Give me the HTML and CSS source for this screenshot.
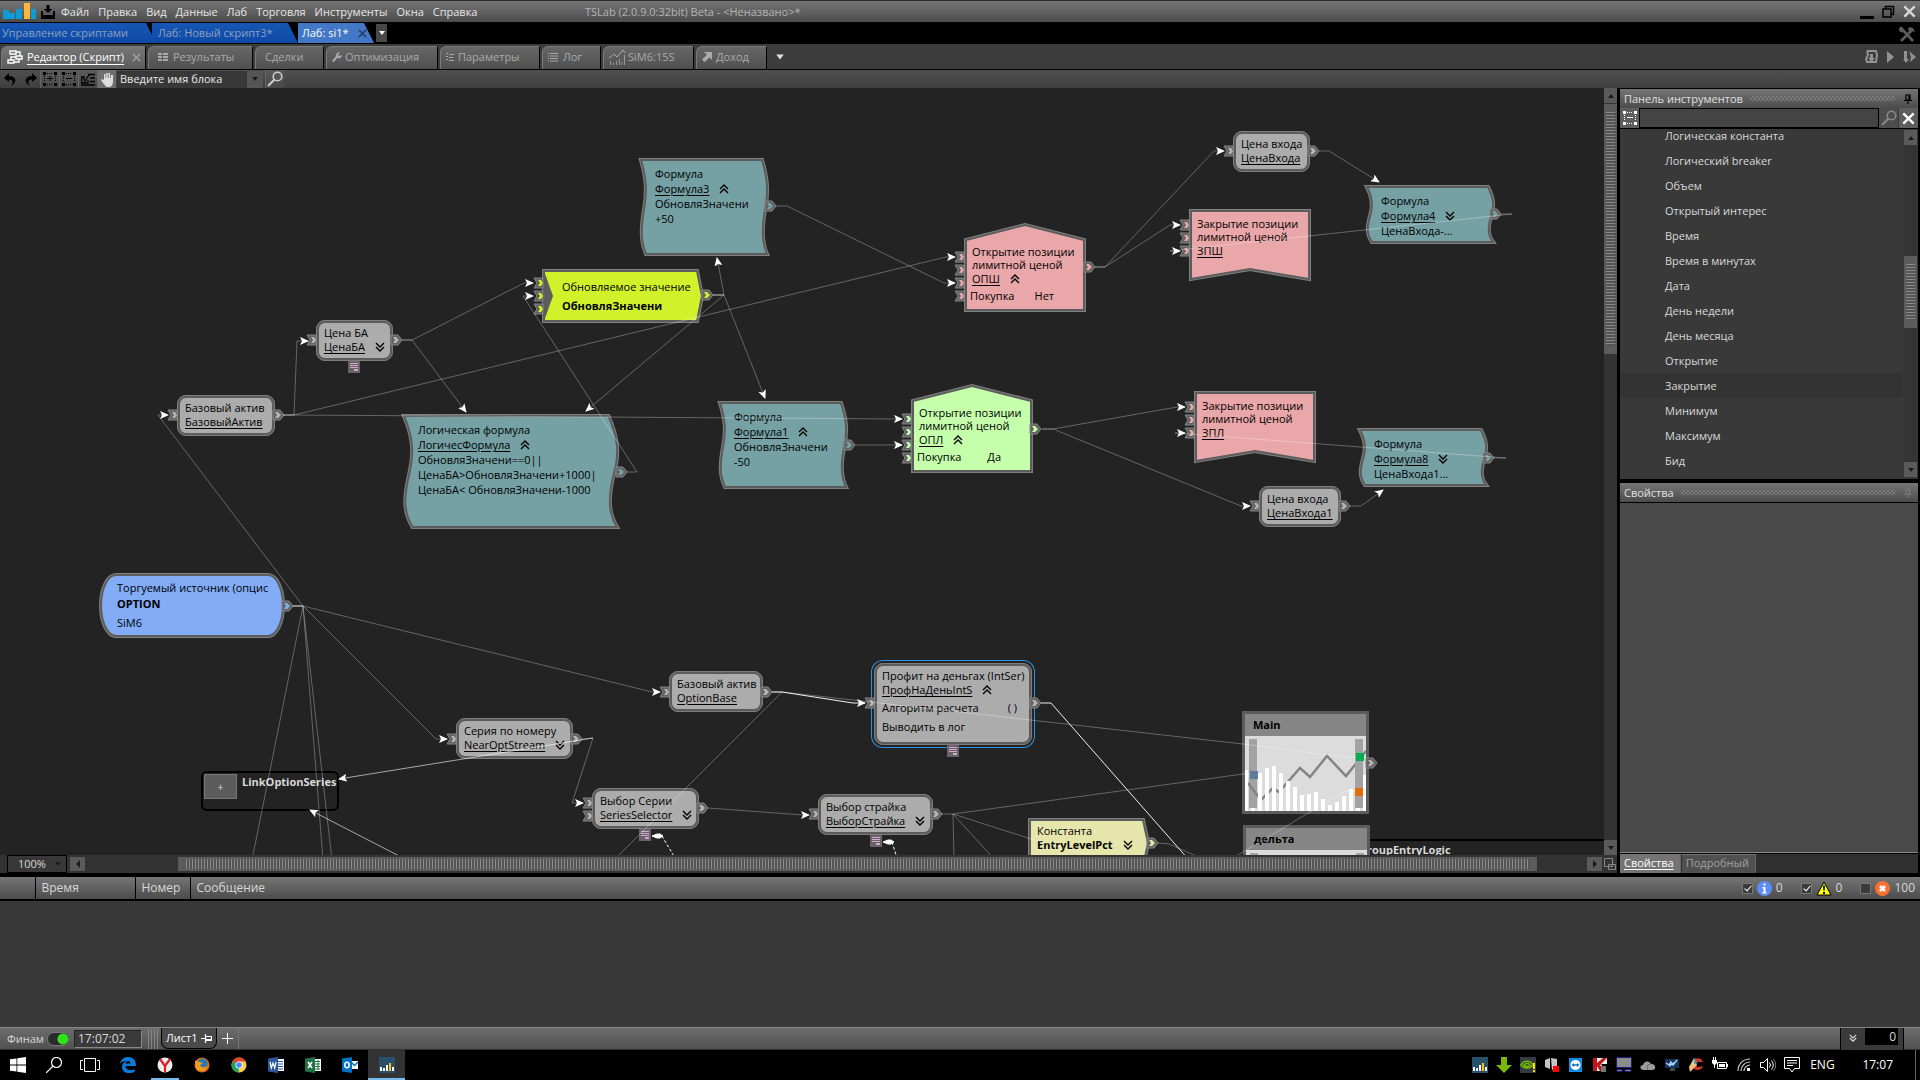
FILE: index.html
```html
<!DOCTYPE html>
<html lang="ru">
<head>
    <meta charset="UTF-8">
    <meta name="viewport" content="width=device-width, initial-scale=1.0">
    <title>TSLab (2.0.9.0:32bit) Beta - &lt;Неназвано&gt;*</title>
    <link rel="stylesheet" href="styles.css">
</head>
<body>
    <!-- shared icons and node parts -->
    <svg class="defs" width="0" height="0" aria-hidden="true">
        <defs>
            <symbol id="chev-down" viewBox="0 0 10 10"><path d="M1 1l4 4 4-4M1 5l4 4 4-4" fill="none" stroke="currentColor" stroke-width="1.4"/></symbol>
            <symbol id="chev-up" viewBox="0 0 10 10"><path d="M1 5l4-4 4 4M1 9l4-4 4 4" fill="none" stroke="currentColor" stroke-width="1.4"/></symbol>
            <symbol id="arrow-down" viewBox="0 0 8 8"><path d="M1 2h6L4 6z" fill="currentColor"/></symbol>
            <symbol id="arrow-up" viewBox="0 0 8 8"><path d="M1 6h6L4 2z" fill="currentColor"/></symbol>
            <symbol id="arrow-left" viewBox="0 0 8 8"><path d="M6 0v8L2 4z" fill="currentColor"/></symbol>
            <symbol id="arrow-right" viewBox="0 0 8 8"><path d="M2 0v8l4-4z" fill="currentColor"/></symbol>
            <symbol id="cross" viewBox="0 0 10 10"><path d="M1 1l8 8M9 1l-8 8" stroke="currentColor" stroke-width="1.8"/></symbol>
            <symbol id="loupe" viewBox="0 0 16 16"><circle cx="10.5" cy="5.5" r="4.3" fill="none" stroke="currentColor" stroke-width="1.6"/><path d="M7.5 8.5L1 15" stroke="currentColor" stroke-width="2.2"/></symbol>
            <symbol id="pin" viewBox="0 0 8 10"><path d="M2 1h4v5H2zM5 1v5M0 6.5h8M4 6v4" fill="none" stroke="currentColor" stroke-width="1.2"/></symbol>
            <symbol id="select-minus" viewBox="0 0 14 14"><path d="M1.5 4v6M12.5 4v6M4 1.5h6M4 12.5h6" fill="none" stroke="currentColor" stroke-dasharray="1 1"/><path d="M0 0h3v3H0zM11 0h3v3h-3zM0 11h3v3H0zM11 11h3v3h-3zM4 6h6v1H4z" fill="currentColor"/></symbol>
            <symbol id="select-plus" viewBox="0 0 14 14"><path d="M1.5 4v6M12.5 4v6M4 1.5h6M4 12.5h6" fill="none" stroke="currentColor" stroke-dasharray="1 1"/><path d="M0 0h3v3H0zM11 0h3v3h-3zM0 11h3v3H0zM11 11h3v3h-3zM4 6h6v1H4zM6.500 4h1v5h-1z" fill="currentColor"/></symbol>
            <symbol id="formula" viewBox="0 0 100 100" preserveAspectRatio="none"><path vector-effect="non-scaling-stroke" d="M0 0H96C100 18 101.500 32 98.500 52C96 72 95.500 86 100 100H4C-.5 86 0 72 2.500 52C5 32 4 18 0 0z"/></symbol>
            <symbol id="note" viewBox="0 0 12 12"><path d="M0 0h12v12H0z" fill="#696369"/><path d="M2 2.500h8M2 4.500h8M2 6.500h8" stroke="#d0a8d0"/><path d="M6 8h4v2H6z" fill="#d0a8d0"/></symbol>
            <symbol id="tslab" viewBox="0 0 16 16"><path d="M0 0h16v16H0z" fill="#27506b"/><path d="M1 10h2v4H1zM4 11h2v3H4zM7 8h2v6H7zM13 10h2v4h-2z" fill="#fff"/><path d="M10 6h2v8h-2z" fill="#ffc20e"/></symbol>
            <g id="in">
                <path d="M-9-5H0V5H-9L-6 0z" fill="#626262" stroke="#858585"/>
                <path d="M-5-3H-2L0 0L-2 3H-5L-3 0z" fill="currentColor"/>
            </g>
            <g id="out">
                <path d="M-2-5H5L9 0L5 5H-2z" fill="#626262" stroke="#858585"/>
                <path d="M0-3H3L6 0L3 3H0L2 0z" fill="currentColor"/>
            </g>
            <marker id="dart" viewBox="0 0 9 8" refX="8" refY="4" markerWidth="9" markerHeight="8" markerUnits="userSpaceOnUse" orient="auto"><path d="M0 0l9 4-9 4 2-4z" fill="#fff"/></marker>
        </defs>
    </svg>

    <div class="app">
        <header class="titlebar">
            <svg class="logo" width="34" height="18" viewBox="0 0 34 18"><path d="M0 7h6v9H0zM6 10h6v6H6zM13 6h6v10h-6zM28 6h5v10h-5z" fill="#0c9dd6"/><path d="M21 0h6v16h-6z" fill="#fdb53a"/></svg>
            <svg width="14" height="14" viewBox="0 0 14 14"><path d="M5.500 0h3v4h3L7 8 2.500 4h3zM0 6h2v4h10V6h2v8H0z"/></svg>
            <nav class="menu">
                <button>Файл</button>
                <button>Правка</button>
                <button>Вид</button>
                <button>Данные</button>
                <button>Лаб</button>
                <button>Торговля</button>
                <button>Инструменты</button>
                <button>Окна</button>
                <button>Справка</button>
            </nav>
            <h1>TSLab (2.0.9.0:32bit) Beta - &lt;Неназвано&gt;*</h1>
            <div class="window-buttons">
                <button aria-label="Свернуть"><svg width="14" height="14" viewBox="0 0 14 14"><path d="M0 11h14v3H0z"/></svg></button>
                <button aria-label="Восстановить"><svg width="13" height="14" viewBox="0 0 13 14"><path d="M1 4h8v8H1zM3.500 4V1.500h8v8H9" fill="none" stroke="#000" stroke-width="1.500"/></svg></button>
                <button aria-label="Закрыть"><svg width="13" height="13"><use href="#cross"/></svg></button>
            </div>
        </header>

        <nav class="workspaces">
            <button class="ws-tab ws-first">Управление скриптами</button>
            <button class="ws-tab ws-second">Лаб: Новый скрипт3*</button>
            <button class="ws-tab active">Лаб: si1* <svg width="9" height="9"><use href="#cross"/></svg></button>
            <button class="ws-more" aria-label="Список"><svg width="8" height="8"><use href="#arrow-down"/></svg></button>
            <svg class="tools" width="18" height="17" viewBox="0 0 18 17"><path d="M3 2l12 13M15 3L3 15" stroke="#5c5c5c" stroke-width="2.600"/><path d="M1 4c1 3 4 3 5 1L4 1C2 0 1 2 1 4zM10 2c3-2 6 0 7 4l-3-1-3 2z" fill="#5c5c5c"/></svg>
        </nav>

        <nav class="doc-tabs">
            <button class="doc active"><svg width="16" height="14" viewBox="0 0 16 14"><path d="M3 1h6v3H3zM9 6h6v3H9zM1 10h6v3H1zM9 2h4v4M9 7H4v3M7 12h5V9" fill="none" stroke="#fff" stroke-width="1.400"/></svg><span>Редактор (Скрипт)</span><svg class="doc-close" width="9" height="9"><use href="#cross"/></svg></button>
            <button class="doc d-results"><svg width="10" height="8" viewBox="0 0 10 8"><path d="M0 0h4v2H0zM5 0h5v2H5zM0 3h4v2H0zM5 3h5v2H5zM0 6h4v2H0zM5 6h5v2H5z" fill="#aaa"/></svg>Результаты</button>
            <button class="doc d-deals">Сделки</button>
            <button class="doc d-optim"><svg width="10" height="10" viewBox="0 0 10 10"><path d="M0 9l4-5C4 1 6 0 8 0L6 3l1 1 3-1c0 3-3 4-5 3L2 10z" fill="#aaa"/></svg>Оптимизация</button>
            <button class="doc d-params"><svg width="8" height="8" viewBox="0 0 8 8"><path d="M0 .5h2M3 1.500h5M0 3.500h2M3 4.500h4M0 6.500h2M3 7.500h5" stroke="#aaa"/></svg>Параметры</button>
            <button class="doc d-log"><svg width="10" height="9" viewBox="0 0 10 9"><path d="M0 .5h1M2 .5h8M0 3h1M2 3h8M0 5.500h1M2 5.500h8M0 8h1M2 8h8" stroke="#aaa"/></svg>Лог</button>
            <button class="doc d-chart"><svg width="16" height="15" viewBox="0 0 16 15"><path d="M0 8l5-4 3 3 6-7 2 3" fill="none" stroke="#aaa"/><path d="M1.500 11v4M4.500 13v2M7.500 11v4M10.500 9v6M13 12v3M15.500 5v10" stroke="#8d9e95"/></svg>SiM6:15S</button>
            <button class="doc d-profit"><svg width="10" height="10" viewBox="0 0 10 10"><path d="M2 0h8v8L7.500 5.500 2.500 10 0 7.500l5-4.800z" fill="#aaa"/></svg>Доход</button>
            <button class="doc-more" aria-label="Ещё"><svg width="10" height="10"><use href="#arrow-down"/></svg></button>
            <div class="run-tools">
                <svg width="13" height="13" viewBox="0 0 13 13"><path d="M2 1h9l1 4-1 7H2L1 9M2 1l1 4-2 4" fill="none" stroke="#929292" stroke-width="2"/><path d="M5 4h3v4h2l-3.500 4L3 8h2z" fill="#929292"/></svg>
                <svg width="7" height="12" viewBox="0 0 7 12"><path d="M0 0l7 6-7 6z" fill="#929292"/></svg>
                <svg width="13" height="12" viewBox="0 0 13 12"><path d="M1 0h3v8h2l-3 4-3-4h1zM6 0l7 6-6 5 1-5z" fill="#929292"/></svg>
            </div>
        </nav>

        <div class="toolbar">
            <button class="flat" aria-label="Отменить"><svg width="13" height="13" viewBox="0 0 13 13"><path d="M5 0L0 5l5 4V6.500c4 0 5 3 2 6.500 6-3 6-10-2-10z"/></svg></button>
            <button class="flat" aria-label="Повторить"><svg width="13" height="13" viewBox="0 0 13 13"><path d="M8 0l5 5-5 4V6.500c-4 0-5 3-2 6.500C0 10 0 3 8 3z"/></svg></button>
            <button class="tool" aria-label="Добавить"><svg width="14" height="14"><use href="#select-plus"/></svg></button>
            <button class="tool" aria-label="Убрать"><svg width="14" height="14"><use href="#select-minus"/></svg></button>
            <button class="tool" aria-label="Проверить"><svg width="14" height="13" viewBox="0 0 14 13"><path d="M7 1.500h7M9 5h5M9 8.500h5M0 12h14M7 7v3H.5V4H4M2 5l2 3 4-6" fill="none" stroke="#000" stroke-width="1.300"/></svg></button>
            <button class="tool hand" aria-label="Рука"><svg width="13" height="15" viewBox="0 0 13 15"><path d="M3 8V2h1.500v4h.8V1h1.500v5h.8V1h1.500v5h.8V3H12v7c0 3-2 5-4 5H6C4 14 2 11 0 8l1-1z" fill="#ddd"/></svg></button>
            <div class="combo combo-block">
                <select aria-label="Имя блока"><option>Введите имя блока</option></select>
                <svg width="8" height="8"><use href="#arrow-down"/></svg>
            </div>
            <button class="tool find" aria-label="Найти"><svg width="16" height="16"><use href="#loupe"/></svg></button>
        </div>

        <main class="main">
            <section class="editor">
                <div class="canvas">
                    <div class="scene">
                        <div class="node plain n-price-ba">
                            <p>Цена БА</p>
                            <p class="name"><a href="#">ЦенаБА</a><svg><use href="#chev-down"/></svg></p>
                        </div>
                        <div class="node plain n-base">
                            <p>Базовый актив</p>
                            <p class="name"><a href="#">БазовыйАктив</a></p>
                        </div>
                        <div class="node formula n-logic">
                            <svg class="shape"><use class="rim" href="#formula"/><use class="face" href="#formula"/></svg>
                            <p>Логическая формула</p>
                            <p class="name"><a href="#">ЛогичесФормула</a><svg><use href="#chev-up"/></svg></p>
                            <p>ОбновляЗначени==0||</p>
                            <p>ЦенаБА&gt;ОбновляЗначени+1000|</p>
                            <p>ЦенаБА&lt; ОбновляЗначени-1000</p>
                        </div>
                        <div class="node formula n-formula3">
                            <svg class="shape"><use class="rim" href="#formula"/><use class="face" href="#formula"/></svg>
                            <p>Формула</p>
                            <p class="name"><a href="#">Формула3</a><svg><use href="#chev-up"/></svg></p>
                            <p>ОбновляЗначени</p>
                            <p>+50</p>
                        </div>
                        <div class="node update n-update">
                            <svg class="shape" viewBox="0 0 162 54"><path class="rim" d="M2 2H155L160 27L155 52H2z"/><path class="face" d="M2 2H155L160 27L155 52H2z"/><path d="M2 2L11 27L2 52z" fill="#5c5c5c"/></svg>
                            <p>Обновляемое значение</p>
                            <p class="name"><b>ОбновляЗначени</b></p>
                        </div>
                        <div class="node formula n-formula1">
                            <svg class="shape"><use class="rim" href="#formula"/><use class="face" href="#formula"/></svg>
                            <p>Формула</p>
                            <p class="name"><a href="#">Формула1</a><svg><use href="#chev-up"/></svg></p>
                            <p>ОбновляЗначени</p>
                            <p>-50</p>
                        </div>
                        <div class="node open short n-opsh">
                            <svg class="shape" viewBox="0 0 122 89"><path class="rim" d="M2 87V17L61 2L120 17V87z"/><path class="face" d="M2 87V17L61 2L120 17V87z"/></svg>
                            <p>Открытие позиции</p>
                            <p>лимитной ценой</p>
                            <p class="name"><a href="#">ОПШ</a><svg><use href="#chev-up"/></svg></p>
                            <p class="param"><span>Покупка</span><span>Нет</span></p>
                        </div>
                        <div class="node open long n-opl">
                            <svg class="shape" viewBox="0 0 122 89"><path class="rim" d="M2 87V17L61 2L120 17V87z"/><path class="face" d="M2 87V17L61 2L120 17V87z"/></svg>
                            <p>Открытие позиции</p>
                            <p>лимитной ценой</p>
                            <p class="name"><a href="#">ОПЛ</a><svg><use href="#chev-up"/></svg></p>
                            <p class="param"><span>Покупка</span><span>Да</span></p>
                        </div>
                        <div class="node plain n-entry">
                            <p>Цена входа</p>
                            <p class="name"><a href="#">ЦенаВхода</a></p>
                        </div>
                        <div class="node plain n-entry1">
                            <p>Цена входа</p>
                            <p class="name"><a href="#">ЦенаВхода1</a></p>
                        </div>
                        <div class="node close short n-zpsh">
                            <svg class="shape" viewBox="0 0 122 73"><path class="rim" d="M2 2H120V70L61 60L2 70z"/><path class="face" d="M2 2H120V70L61 60L2 70z"/></svg>
                            <p>Закрытие позиции</p>
                            <p>лимитной ценой</p>
                            <p class="name"><a href="#">ЗПШ</a></p>
                        </div>
                        <div class="node close short n-zpl">
                            <svg class="shape" viewBox="0 0 122 73"><path class="rim" d="M2 2H120V70L61 60L2 70z"/><path class="face" d="M2 2H120V70L61 60L2 70z"/></svg>
                            <p>Закрытие позиции</p>
                            <p>лимитной ценой</p>
                            <p class="name"><a href="#">ЗПЛ</a></p>
                        </div>
                        <div class="node formula n-formula4">
                            <svg class="shape"><use class="rim" href="#formula"/><use class="face" href="#formula"/></svg>
                            <p>Формула</p>
                            <p class="name"><a href="#">Формула4</a><svg><use href="#chev-down"/></svg></p>
                            <p>ЦенаВхода-...</p>
                        </div>
                        <div class="node formula n-formula8">
                            <svg class="shape"><use class="rim" href="#formula"/><use class="face" href="#formula"/></svg>
                            <p>Формула</p>
                            <p class="name"><a href="#">Формула8</a><svg><use href="#chev-down"/></svg></p>
                            <p>ЦенаВхода1...</p>
                        </div>
                        <div class="node source n-option">
                            <svg class="shape" viewBox="0 0 186 65"><path class="rim" d="M17 2H169A15 30.500 0 0 1 169 63H17A15 30.500 0 0 1 17 2z"/><path class="face" d="M17 2H169A15 30.500 0 0 1 169 63H17A15 30.500 0 0 1 17 2z"/></svg>
                            <p>Торгуемый источник (опцис</p>
                            <p><b>OPTION</b></p>
                            <p class="security">SiM6</p>
                        </div>
                        <div class="node plain n-stream">
                            <p>Серия по номеру</p>
                            <p class="name"><a href="#">NearOptStream</a><svg><use href="#chev-down"/></svg></p>
                        </div>
                        <div class="group n-link">
                            <button>+</button>
                            <b>LinkOptionSeries</b>
                        </div>
                        <div class="node plain n-optbase">
                            <p>Базовый актив</p>
                            <p class="name"><a href="#">OptionBase</a></p>
                        </div>
                        <div class="node plain selected n-profit">
                            <p>Профит на деньгах (IntSer)</p>
                            <p class="name"><a href="#">ПрофНаДеньIntS</a><svg><use href="#chev-up"/></svg></p>
                            <p class="param"><span>Алгоритм расчета</span><span>( )</span></p>
                            <p class="param"><span>Выводить в лог</span></p>
                        </div>
                        <div class="node plain n-series">
                            <p>Выбор Серии</p>
                            <p class="name"><a href="#">SeriesSelector</a><svg><use href="#chev-down"/></svg></p>
                        </div>
                        <div class="node plain n-strike">
                            <p>Выбор страйка</p>
                            <p class="name"><a href="#">ВыборСтрайка</a><svg><use href="#chev-down"/></svg></p>
                        </div>
                        <div class="node const n-const">
                            <svg class="shape" viewBox="0 0 122 50"><path class="rim" d="M2 2H115L120 25L115 48H2z"/><path class="face" d="M2 2H115L120 25L115 48H2z"/></svg>
                            <p>Константа</p>
                            <p class="name"><b>EntryLevelPct</b><svg><use href="#chev-down"/></svg></p>
                        </div>
                        <div class="group n-group"><b>GroupEntryLogic</b></div>
                        <div class="chart n-main">
                            <h3>Main</h3>
                            <svg width="121" height="75" viewBox="0 0 121 75">
                                <path d="M4 3h8v69H4z" fill="#a2a2a2"/>
                                <path d="M3 47l13 17 12-12 6 4 21-24 10 9 17-21 19 20 20-25" fill="none" stroke="#848484" stroke-width="2.500"/>
                                <path d="M110 3h8v69h-8z" fill="#a2a2a2"/>
                                <path d="M0 34h3v41H0zM6 72h4v3H6zM13 37h4v38h-4zM20 32h4v43h-4zM27 30h4v45h-4zM34 37h4v38h-4zM41 45h4v30h-4zM48 51h4v24h-4zM55 59h4v16h-4zM62 58h4v17h-4zM69 56h4v19h-4zM76 63h4v12h-4zM83 69h4v6h-4zM90 66h4v9h-4zM97 60h4v15h-4zM104 53h4v22h-4zM111 72h4v3h-4zM118 39h3v36h-3z" fill="#fff"/>
                                <path d="M5 35h8v8H5z" fill="#5f7b9b"/>
                                <path d="M111 17h8v8h-8z" fill="#00b050"/>
                                <path d="M110 52h8v8h-8z" fill="#e46c0a"/>
                            </svg>
                        </div>
                        <div class="chart n-delta">
                            <h3>дельта</h3>
                            <svg width="121" height="75" viewBox="0 0 121 75"><path d="M4 3h8v69H4zM110 3h8v69h-8z" fill="#a2a2a2"/></svg>
                        </div>

                        <!-- ports, notes and links lie over the nodes -->
                        <svg class="links" width="1604" height="943">
                            <g color="#b4b4b4">
                                <use href="#in" x="316" y="340"/><use href="#out" x="393" y="340"/>
                                <use href="#in" x="177" y="415"/><use href="#out" x="275" y="415"/>
                                <use href="#in" x="1233" y="151"/><use href="#out" x="1310" y="151"/>
                                <use href="#in" x="1259" y="506"/><use href="#out" x="1341" y="506"/>
                                <use href="#in" x="456" y="739"/><use href="#out" x="573" y="739"/>
                                <use href="#in" x="669" y="692"/><use href="#out" x="763" y="692"/>
                                <use href="#in" x="874" y="703"/><use href="#out" x="1032" y="703"/>
                                <use href="#in" x="592" y="803"/><use href="#in" x="592" y="816"/><use href="#out" x="699" y="808"/>
                                <use href="#in" x="818" y="814"/><use href="#out" x="933" y="814"/>
                                <use href="#out" x="1368" y="763"/>
                            </g>
                            <g color="#76a1a4">
                                <use href="#out" x="618" y="472"/><use href="#out" x="767" y="206"/><use href="#out" x="846" y="445"/>
                                <use href="#out" x="1492" y="214"/><use href="#out" x="1485" y="458"/>
                            </g>
                            <g color="#d1f22b">
                                <use href="#in" x="543" y="283"/><use href="#in" x="543" y="296"/><use href="#in" x="543" y="309"/><use href="#out" x="704" y="295"/>
                            </g>
                            <g color="#e9a7a9">
                                <use href="#in" x="964" y="257"/><use href="#in" x="964" y="270"/><use href="#in" x="964" y="283"/><use href="#in" x="964" y="296"/><use href="#out" x="1086" y="267"/>
                                <use href="#in" x="1189" y="225"/><use href="#in" x="1189" y="238"/><use href="#in" x="1189" y="251"/>
                                <use href="#in" x="1194" y="407"/><use href="#in" x="1194" y="420"/><use href="#in" x="1194" y="433"/>
                            </g>
                            <g color="#c5ffac">
                                <use href="#in" x="911" y="419"/><use href="#in" x="911" y="432"/><use href="#in" x="911" y="445"/><use href="#in" x="911" y="458"/><use href="#out" x="1032" y="429"/>
                            </g>
                            <use href="#out" x="284" y="606" color="#82acf5"/>
                            <use href="#out" x="1149" y="843" color="#e5e5ac"/>

                            <use href="#note" x="348" y="361" width="12" height="12"/>
                            <use href="#note" x="947" y="745" width="12" height="12"/>
                            <use href="#note" x="639" y="829" width="12" height="12"/>
                            <use href="#note" x="870" y="835" width="12" height="12"/>

                            <g class="link">
                                <path d="M283 415H294L297 341H308"/>
                                <path d="M283 415H294L946 257H955"/>
                                <path d="M283 415H294L902 419"/>
                                <path d="M402 340H412L524 283H533"/>
                                <path d="M402 340H412L466 412"/>
                                <path d="M627 472H637L523 296H533"/>
                                <path d="M713 295H724L586 411"/>
                                <path d="M713 295H724L717 258"/>
                                <path d="M713 295H724L765 398"/>
                                <path d="M776 206H787L944 283H955"/>
                                <path d="M855 445H902"/>
                                <path d="M1095 267H1105L1214 151H1224"/>
                                <path d="M1095 267H1105L1170 225H1180"/>
                                <path d="M1319 151H1329L1379 182"/>
                                <path d="M1501 214H1512L1170 251H1180"/>
                                <path d="M1042 429H1053L1177 407H1185"/>
                                <path d="M1042 429H1053L1241 506H1250"/>
                                <path d="M1350 506H1361L1383 490"/>
                                <path d="M1494 458H1506L1175 433H1185"/>
                                <path d="M293 606H303L158 415H168"/>
                                <path d="M293 606H303L436 739H447"/>
                                <path d="M293 606H303L652 692H660"/>
                                <path d="M582 739L593 738L572 803H583"/>
                                <path d="M708 808L803 815H809"/>
                            </g>
                            <g class="link cut">
                                <path d="M293 606H303L252 860M303 606L323 860M303 606L332 860"/>
                                <path d="M772 692H782L614 860M782 692L1243 744L1345 757H1356"/>
                                <path d="M941 814H953L1243 774H1250M953 814L1031 839L1100 858M953 814L954 860M953 814L995 860"/>
                                <path d="M1158 843L1169 844L1205 860M1233 858L1345 791H1355"/>
                            </g>
                            <path class="link lit" d="M593 738L339 779"/>
                            <path class="link lit" d="M405 859L310 810"/>
                            <path class="link hot" d="M772 692H782L853 703H865"/>
                            <path class="link hot cut" d="M1041 703H1051L1189 860"/>
                            <path class="dash" d="M662 836L675 858M892 842L897 858"/>
                            <path d="M652 836l5-2h3l3 2-3 2h-3zM883 842l5-2h3l3 2-3 2h-3z" fill="#fff" stroke="#fff"/>
                        </svg>
                    </div>
                </div>
                <div class="scroll vertical">
                    <button aria-label="Вверх"><svg width="8" height="8"><use href="#arrow-up"/></svg></button>
                    <div class="track"><div class="thumb"></div></div>
                    <button aria-label="Вниз"><svg width="8" height="8"><use href="#arrow-down"/></svg></button>
                </div>
                <div class="bottom-row">
                    <div class="combo combo-zoom">
                        <select aria-label="Масштаб"><option>100%</option></select>
                        <svg width="8" height="8"><use href="#arrow-down"/></svg>
                    </div>
                    <div class="scroll horizontal">
                        <button aria-label="Влево"><svg width="8" height="8"><use href="#arrow-left"/></svg></button>
                        <div class="track"><div class="thumb"></div></div>
                        <button aria-label="Вправо"><svg width="8" height="8"><use href="#arrow-right"/></svg></button>
                    </div>
                    <svg width="12" height="12" viewBox="0 0 12 12"><path d="M.5.5h8v8h-8zM4.500 6.500h7v5h-7z" fill="none" stroke="#888"/></svg>
                </div>
            </section>

            <aside class="side">
                <section class="palette">
                    <h2>Панель инструментов<i></i><svg width="8" height="10"><use href="#pin"/></svg></h2>
                    <div class="search">
                        <button aria-label="Свернуть все"><svg width="14" height="14"><use href="#select-minus"/></svg></button>
                        <input type="text" aria-label="Поиск">
                        <button class="dim" aria-label="Найти"><svg width="16" height="16"><use href="#loupe"/></svg></button>
                        <button aria-label="Очистить"><svg width="13" height="13"><use href="#cross"/></svg></button>
                    </div>
                    <div class="palette-body">
                        <ul>
                            <li>Логическая константа</li>
                            <li>Логический breaker</li>
                            <li>Объем</li>
                            <li>Открытый интерес</li>
                            <li>Время</li>
                            <li>Время в минутах</li>
                            <li>Дата</li>
                            <li>День недели</li>
                            <li>День месяца</li>
                            <li>Открытие</li>
                            <li class="hover">Закрытие</li>
                            <li>Минимум</li>
                            <li>Максимум</li>
                            <li>Бид</li>
                        </ul>
                        <div class="scroll vertical">
                            <button aria-label="Вверх"><svg width="8" height="8"><use href="#arrow-up"/></svg></button>
                            <div class="track"><div class="thumb"></div></div>
                            <button aria-label="Вниз"><svg width="8" height="8"><use href="#arrow-down"/></svg></button>
                        </div>
                    </div>
                </section>
                <section class="props">
                    <h2>Свойства<i></i><svg class="faint" width="8" height="10"><use href="#pin"/></svg></h2>
                    <div class="props-body"></div>
                    <div class="props-tabs">
                        <button class="active">Свойства</button>
                        <button>Подробный</button>
                    </div>
                </section>
            </aside>
        </main>

        <section class="log">
            <table>
                <thead>
                    <tr>
                        <th class="c-icon"></th>
                        <th class="c-time">Время</th>
                        <th class="c-number">Номер</th>
                        <th>
                            <div class="message-head">
                                <span>Сообщение</span>
                                <label class="f-info"><input type="checkbox" checked><svg width="15" height="15" viewBox="0 0 15 15"><circle cx="7.500" cy="7.500" r="7.500" fill="#5b8dfb"/><path d="M6.500 2.500h2v2h-2zM5.500 6h3v5h1v1.500h-4V11h1V7.500h-1z" fill="#fff"/></svg>0</label>
                                <label class="f-warn"><input type="checkbox" checked><svg width="16" height="15" viewBox="0 0 16 15"><path d="M8 1l7 13H1z" fill="#ff0" stroke="#000" stroke-linejoin="round"/><path d="M7 4.500h2L8.500 10h-1zM7 11h2v2H7z"/></svg>0</label>
                                <label class="f-error"><input type="checkbox"><svg width="15" height="15" viewBox="0 0 15 15"><circle cx="7.500" cy="7.500" r="7.500" fill="#fd7033"/><path d="M5 5l5 5M10 5l-5 5" stroke="#fff" stroke-width="2.500"/></svg>100</label>
                            </div>
                        </th>
                    </tr>
                </thead>
            </table>
        </section>

        <footer class="status">
            <label class="provider">Финам <input type="checkbox" checked></label>
            <input class="clock" type="text" value="17:07:02" readonly aria-label="Время сервера">
            <i class="grip"></i>
            <button class="sheet">Лист1<svg width="11" height="9" viewBox="0 0 11 9"><path d="M0 4.500h4M4.500 0v9M5 2.500h5.500v4H5M5 5.500h5" fill="none" stroke="#fff" stroke-width="1.200"/></svg></button>
            <button class="add-sheet" aria-label="Новый лист"><svg width="11" height="11" viewBox="0 0 11 11"><path d="M5.500 0v11M0 5.500h11" stroke="#fff"/></svg></button>
            <div class="counter">
                <svg width="8" height="8"><use href="#chev-down"/></svg>
                <input type="text" value="0" readonly aria-label="Счётчик">
            </div>
        </footer>
    </div>

    <div class="taskbar">
        <div class="system">
            <button aria-label="Пуск"><svg width="16" height="16" viewBox="0 0 16 16"><path d="M0 2.300L6.500 1.400V7.600H0zM7.300 1.300L16 0V7.600H7.300zM0 8.400H6.500V14.600L0 13.700zM7.300 8.400H16V16L7.300 14.700z" fill="#fff"/></svg></button>
            <button aria-label="Поиск"><svg width="16" height="16" viewBox="0 0 16 16"><circle cx="10.500" cy="5.500" r="5" fill="none" stroke="#fff" stroke-width="1.200"/><path d="M7 9L0 16" stroke="#fff" stroke-width="1.200"/></svg></button>
            <button aria-label="Представление задач"><svg width="20" height="14" viewBox="0 0 20 14"><path d="M4.500.5h11v13h-11zM3 2.500H.5v9H3M17 2.500h2.500v9H17" fill="none" stroke="#fff"/></svg></button>
        </div>
        <div class="apps">
            <button aria-label="Edge"><svg width="16" height="16" viewBox="0 0 16 16"><path d="M0 7C1 2 4 0 8 0c5 0 8 3 8 9H5.500c0 4 6 5 9 3v3C9 17.500 2 16 2 10c0-3 2-5 4-6C3 4 1 5 0 7zM5.500 6.500h5C10.500 3 6 3 5.500 6.500z" fill="#0a7adb"/></svg></button>
            <button class="open-app" aria-label="Yandex"><svg width="16" height="16" viewBox="0 0 16 16"><circle cx="8" cy="8" r="7.500" fill="#eee"/><path d="M3 2l5 7 5-7M8 8v7" fill="none" stroke="#e21f26" stroke-width="2.200"/></svg></button>
            <button aria-label="Firefox"><svg width="16" height="16" viewBox="0 0 16 16"><circle cx="8" cy="8" r="7.500" fill="#e66a10"/><circle cx="8.500" cy="6.500" r="5" fill="#2779b8"/><path d="M1 4c2-1 3 1 5 1l3 1-3 2c1 3 5 3 7 1 0 3-3 5-6 5-4 0-6-3-6-10z" fill="#f39b1d"/></svg></button>
            <button aria-label="Chrome"><svg width="16" height="16" viewBox="0 0 16 16"><circle cx="8" cy="8" r="7.500" fill="#fc4"/><path d="M8 8L1.500 4.200A7.500 7.500 0 0 0 7.500 15.500z" fill="#1da462"/><path d="M1.500 4.200A7.500 7.500 0 0 1 14.600 4.500H8v4z" fill="#dc4437"/><circle cx="8" cy="8" r="3.600" fill="#fff"/><circle cx="8" cy="8" r="2.800" fill="#4a8af4"/></svg></button>
            <button aria-label="Word"><svg width="16" height="16" viewBox="0 0 16 16"><path d="M9 2h7v12H9z" fill="#fff"/><path d="M10 4.500h5M10 7h5M10 9.500h5M10 12h5" stroke="#2b579a"/><path d="M0 1.500L10 0v16L0 14.500z" fill="#2b579a"/><path d="M2 5l1.300 6L5 6l1.700 5L8 5" fill="none" stroke="#fff" stroke-width="1.200"/></svg></button>
            <button aria-label="Excel"><svg width="16" height="16" viewBox="0 0 16 16"><path d="M9 2h7v12H9z" fill="#fff"/><path d="M10 4.500h5M10 7h5M10 9.500h5M10 12h5M13 3v10" stroke="#217346"/><path d="M0 1.500L10 0v16L0 14.500z" fill="#217346"/><path d="M3 5l4 6M7 5l-4 6" stroke="#fff" stroke-width="1.500"/></svg></button>
            <button aria-label="Outlook"><svg width="16" height="16" viewBox="0 0 16 16"><path d="M9 4h7v8H9z" fill="#fff"/><path d="M9 5l3.500 3.500L16 5" fill="none" stroke="#0072c6" stroke-width="1.500"/><path d="M0 1.500L10 0v16L0 14.500z" fill="#0072c6"/><ellipse cx="5" cy="8" rx="2.200" ry="2.800" fill="none" stroke="#fff" stroke-width="1.500"/></svg></button>
            <button class="open-app current" aria-label="TSLab"><svg width="16" height="16"><use href="#tslab"/></svg></button>
        </div>
        <div class="tray">
            <span><svg width="16" height="16"><use href="#tslab"/></svg></span>
            <span><svg width="16" height="16" viewBox="0 0 16 16"><path d="M5 0h6v8h5l-8 8-8-8h5z" fill="#76b900"/></svg></span>
            <span><svg width="16" height="16" viewBox="0 0 16 16"><path d="M0 0h16v16H0z" fill="#333b40"/><path d="M1 8c3-5 9-5 12 0-3 4-9 4-12 0zM4 8c2-2 5-2 6 0-1 2-4 2-6 0z" fill="none" stroke="#76b900" stroke-width="1.500"/><path d="M13 6h2v6h-2zM13 13h2v2h-2z" fill="#fd0"/></svg></span>
            <span><svg width="16" height="16" viewBox="0 0 16 16"><path d="M1 3l5-2v11l-5-2zM7 1l6 1v8l-5 3z" fill="#c5c5c5"/><path d="M9 9h6v6H9z" fill="#f00"/></svg></span>
            <span><svg width="16" height="16" viewBox="0 0 16 16"><path d="M1 1h13v14H1z" fill="#0d8de6"/><circle cx="7.500" cy="8" r="5" fill="#fff"/><path d="M3.500 8L6 6v1.300h3V6l2.500 2L9 10V8.700H6V10z" fill="#0d6ec0"/></svg></span>
            <span><svg width="16" height="16" viewBox="0 0 16 16"><path d="M1 1h14v6H9l4 7H1z" fill="#eee"/><path d="M1 1h4v5l6-5h4L8 8l4 6H8L5 9v5H1z" fill="#c3161c"/><path d="M9 9h5v6H9z" fill="#777"/></svg></span>
            <span><svg width="16" height="16" viewBox="0 0 16 16"><path d="M.5.500h15v10H.5z" fill="#8b8b8b" stroke="#1a1a7a"/><path d="M1 12.500h5v2H1zM9 12.500h6v2H9z" fill="#8b8b8b" stroke="#1a1a7a"/></svg></span>
            <span><svg width="16" height="16" viewBox="0 0 16 16"><path d="M3 13c-4-1-3-5 0-5 1-4 6-5 8-1 4-1 6 5 2 6z" fill="#9b9b9b"/><path d="M8 13C6 9 8 7 11 7" fill="none" stroke="#666"/></svg></span>
            <span><svg width="16" height="16" viewBox="0 0 16 16"><path d="M1 2h14v9H1z" fill="#15355c"/><path d="M2 6l3 2 2-3 2 3 4-5M5 9l5-3" stroke="#a6d0f5" stroke-width="1.500" fill="none"/><path d="M6 11h5v3H6z" fill="#444"/></svg></span>
            <span><svg width="16" height="16" viewBox="0 0 16 16"><path d="M15 5C14 1 9 0 6 3s-2 10 3 10c3 0 5-1 6-4l-4 1c-3 1-4-4-1-5z" fill="#cc3a26"/><path d="M6 1l3 7-7 7-1-5z" fill="#edc27f"/><path d="M7 0l2 6-3 1z" fill="#3d87c9"/></svg></span>
            <span><svg width="16" height="16" viewBox="0 0 16 16"><path d="M5.500 5.500h9v6h-9z" fill="none" stroke="#fff"/><path d="M7 7h6v3H7zM15 7h1v3h-1zM0 3h5v3L3 8v3H2V8L0 6zM1 0h1v3H1zM3 0h1v3H3z" fill="#fff"/></svg></span>
            <span><svg width="14" height="14" viewBox="0 0 14 14"><path d="M1 13C1 6 6 1 13 1M4 13c0-5 4-9 9-9M7 13c0-3 3-6 6-6" fill="none" stroke="#ccc" stroke-width="1.200"/><path d="M10 10h3v3h-3z" fill="#fff"/></svg></span>
            <span><svg width="16" height="16" viewBox="0 0 16 16"><path d="M.5 5.500h3l4-4v13l-4-4h-3zM9.500 5.500q2 2.500 0 5M11.500 3.500q3.500 4.500 0 9" fill="none" stroke="#fff"/><path d="M13.500 2q4.500 6 0 12" fill="none" stroke="#777"/></svg></span>
            <span><svg width="16" height="16" viewBox="0 0 16 16"><path d="M.5.500h15v11h-5L8 15l-2.500-3.500h-5z" fill="none" stroke="#fff"/><path d="M3 3.500h10M3 6h10M3 8.500h6" stroke="#fff"/></svg></span>
            <button class="lang">ENG</button>
            <time>17:07</time>
        </div>
    </div>
</body>
</html>
```

FILE: styles.css
```css
* {
    box-sizing: border-box;
}
body {
    margin: 0;
    height: 100vh;
    display: flex;
    flex-direction: column;
    background: #000;
    color: #d8d8d8;
    font-family: "Open Sans", "Noto Sans", sans-serif;
    font-size: 11px;
    line-height: 16px;
    overflow: hidden;
}
button, input, select {
    font: inherit;
    color: inherit;
    margin: 0;
    padding: 0;
    border: none;
    border-radius: 0;
    background: none;
}
button {
    white-space: nowrap;
}
select {
    appearance: none;
}
p, h1, h2, h3, ul {
    margin: 0;
    padding: 0;
    font-size: 11px;
    font-weight: normal;
    list-style: none;
}
svg {
    display: block;
    flex: none;
}
.defs {
    position: absolute;
}
#formula {
    overflow: visible;
}
.app {
    flex: 1;
    min-height: 0;
    display: flex;
    flex-direction: column;
}

/* title bar */
.titlebar {
    position: relative;
    height: 22px;
    display: flex;
    align-items: center;
    padding-left: 3px;
    border-top: 1px solid #2b2b2b;
    background: linear-gradient(#757575, #4c4c4c);
}
.logo {
    margin-right: 4px;
}
.menu {
    display: flex;
    gap: 9px;
    margin-left: 6px;
    color: #e6e6e6;
}
.titlebar h1 {
    position: absolute;
    left: 585px;
    color: #b4b4b4;
}
.window-buttons {
    display: flex;
    gap: 8px;
    margin-left: auto;
    padding-right: 4px;
}

/* workspace tabs */
.workspaces {
    height: 22px;
    display: flex;
    align-items: center;
}
.ws-tab {
    height: 20px;
    padding: 0 0 0 4px;
    display: flex;
    align-items: center;
    gap: 9px;
    text-align: left;
    color: #8fa0bd;
    background: linear-gradient(#1756b4, #0d4aa8);
    clip-path: polygon(0 0, calc(100% - 10px) 0, 100% 100%, 0 100%);
}
.ws-first {
    width: 156px;
    padding-left: 2px;
}
.ws-second {
    width: 146px;
    margin-left: -4px;
    padding-left: 6px;
}
.ws-tab.active {
    width: 76px;
    color: #fff;
    background: #4378c6;
}
.ws-tab.active svg {
    color: #26406a;
}
.ws-more {
    width: 11px;
    height: 18px;
    margin-left: 2px;
    background: #484848;
    color: #fff;
    display: grid;
    place-items: center;
}
.tools {
    margin: 2px 4px 0 auto;
}

/* document tabs */
.doc-tabs {
    height: 26px;
    display: flex;
    align-items: flex-end;
    padding-left: 1px;
    gap: 2px;
    background: #3c3c3c;
    border-bottom: 1px solid #000;
}
.doc {
    height: 23px;
    display: flex;
    align-items: center;
    gap: 5px;
    padding: 0 0 2px 9px;
    color: #aaa;
    background: linear-gradient(#666, #505050);
    border-top: 1px solid #7a7a7a;
    border-left: 1px solid #7a7a7a;
    border-right: 1px solid #000;
    border-top-left-radius: 6px;
}
.doc.active {
    width: 145px;
    padding-left: 5px;
    gap: 4px;
    color: #fff;
    background: linear-gradient(#767676, #5c5c5c);
}
.doc.active span {
    text-decoration: underline;
    text-underline-offset: 3px;
}
.doc-close {
    margin-left: 4px;
    color: #999;
}
.d-results { width: 105px; }
.d-deals { width: 69px; }
.d-optim { width: 112px; padding-left: 5px; gap: 3px; }
.d-params { width: 100px; padding-left: 5px; gap: 4px; }
.d-log { width: 59px; padding-left: 5px; }
.d-chart { width: 91px; padding-left: 5px; gap: 3px; }
.d-profit { width: 71px; padding-left: 5px; gap: 4px; }
.doc-more {
    align-self: center;
    margin-left: 6px;
    color: #e0e0e0;
}
.run-tools {
    display: flex;
    align-items: center;
    align-self: center;
    gap: 9px;
    margin-left: auto;
    padding-right: 4px;
}

/* block toolbar */
.toolbar {
    height: 18px;
    display: flex;
    align-items: center;
    background: linear-gradient(#4f4f4f, #3f3f3f);
}
.toolbar button {
    height: 18px;
    display: grid;
    place-items: center;
}
.toolbar .flat {
    width: 20px;
    color: #000;
}
.toolbar .tool {
    width: 19px;
    color: #000;
    background: linear-gradient(#5a5a5a, #484848);
    border-left: 1px solid #666;
}
.toolbar .hand {
    background: #6e6e6e;
}
.toolbar .find {
    margin-left: 2px;
    color: #ccc;
}
.combo {
    display: flex;
    align-items: center;
}
.combo-block {
    height: 17px;
    width: 146px;
    margin-left: 1px;
    background: linear-gradient(90deg, #383838 130px, #555 130px);
}
.combo-block select {
    width: 130px;
    height: 16px;
    line-height: 16px;
    padding-left: 3px;
    color: #e8e8e8;
}
.combo-block svg {
    margin-left: 4px;
    color: #1b1b1b;
}

/* main area */
.main {
    flex: 1;
    min-height: 0;
    display: grid;
    grid-template-columns: 1fr 298px;
    gap: 3px;
    padding-right: 2px;
}
.editor {
    display: grid;
    grid-template-columns: 1fr 13px;
    grid-template-rows: 1fr 18px;
    min-width: 0;
    min-height: 0;
    background: #333;
}
.canvas {
    position: relative;
    overflow: hidden;
    background: #232323;
}
.scene {
    position: absolute;
    top: -88px;
    left: 0;
    width: 1604px;
    height: 943px;
}
.scroll {
    display: flex;
    background: #333;
}
.scroll button {
    display: grid;
    place-items: center;
    flex: none;
    color: #1c1c1c;
    background: #5a5a5a;
}
.scroll.vertical {
    flex-direction: column;
    width: 13px;
}
.scroll.vertical button {
    height: 15px;
}
.track {
    flex: 1;
}
.thumb {
    background: #5c5c5c;
    padding: 8px 2px;
}
.thumb::before {
    content: "";
    display: block;
    width: 100%;
    height: 100%;
}
.vertical .thumb::before {
    background: repeating-linear-gradient(#8a8a8a 0 1px, #545454 1px 3px);
}
.editor .vertical .thumb {
    height: 250px;
    margin-top: 1px;
}
.bottom-row {
    grid-column: 1 / 3;
    display: flex;
    align-items: center;
    padding-right: 1px;
}
.combo-zoom {
    width: 60px;
    height: 18px;
    margin: 0 3px 0 7px;
    border: 1px solid #000;
    background: #383838;
}
.combo-zoom select {
    width: 46px;
    height: 16px;
    padding-left: 10px;
}
.combo-zoom svg {
    color: #1b1b1b;
}
.scroll.horizontal {
    flex: 1;
    height: 14px;
    margin-right: 2px;
}
.horizontal button {
    width: 15px;
}
.horizontal .thumb {
    width: 1359px;
    height: 14px;
    margin-left: 93px;
    padding: 2px 8px;
}
.horizontal .thumb::before {
    background: repeating-linear-gradient(90deg, #8a8a8a 0 1px, #545454 1px 3px);
}

/* diagram nodes */
.node {
    position: absolute;
    color: #000;
    white-space: nowrap;
    line-height: 14px;
}
.node p {
    position: relative;
}
.node a {
    color: #000;
    text-decoration: underline;
    text-underline-offset: 2px;
}
.name {
    display: flex;
    align-items: center;
    gap: 10px;
}
.name svg {
    width: 10px;
    height: 10px;
}
.shape {
    position: absolute;
    inset: 0;
    width: 100%;
    height: 100%;
    overflow: visible;
}
.rim {
    fill: none;
    stroke: #808080;
    stroke-width: 4px;
}
.face {
    fill: var(--fill);
    stroke: #5c5c5c;
    stroke-width: 2px;
}
.plain {
    height: 41px;
    padding: 3px 5px;
    border: 3px solid #5c5c5c;
    border-radius: 9px;
    outline: 1px solid #7d7d7d;
    outline-offset: -1px;
    background: #acacac;
}
.formula {
    --fill: #76a1a4;
    padding: 8px 0 0 16px;
    line-height: 15px;
}
.formula .shape {
    inset: 2px;
    width: calc(100% - 4px);
    height: calc(100% - 4px);
}
.open {
    width: 122px;
    height: 89px;
    padding: 22px 0 0 8px;
    line-height: 13px;
}
.open .name, .close .name {
    line-height: 15px;
}
.param {
    display: flex;
    justify-content: space-between;
}
.open .param {
    margin-left: -2px;
    padding-right: 32px;
    line-height: 20px;
}
.close {
    width: 122px;
    height: 73px;
    padding: 8px 0 0 8px;
    line-height: 13px;
}
.short { --fill: #e9a7a9; }
.long { --fill: #c5ffac; }
.update {
    --fill: #d1f22b;
    width: 162px;
    height: 54px;
    padding: 8px 0 0 20px;
    line-height: 19px;
}
.source {
    --fill: #82acf5;
    width: 186px;
    height: 65px;
    padding: 7px 10px 0 18px;
    line-height: 16px;
}
.source .security {
    line-height: 22px;
}
.const {
    --fill: #e5e5ac;
    width: 122px;
    height: 50px;
    padding: 6px 0 0 9px;
}
.selected {
    height: 82px;
    padding-right: 0;
    box-shadow: 0 0 0 2px #232323, 0 0 0 3px #2b94e8;
}
.selected .param {
    margin-top: 2px;
    line-height: 17px;
    padding-right: 12px;
}
.group {
    position: absolute;
    display: flex;
    gap: 5px;
    border: 2px solid #000;
    border-radius: 6px;
    padding: 1px;
}
.group button {
    flex: none;
    width: 33px;
    height: 25px;
    background: #5c5c5c;
    border: 1px solid #777;
}
.chart {
    position: absolute;
    width: 127px;
    height: 103px;
    border: 3px solid #5c5c5c;
    background: #dcdcdc;
    color: #000;
}
.chart h3 {
    height: 22px;
    padding-left: 8px;
    line-height: 22px;
    font-weight: bold;
    background: #868686;
}
.links {
    position: absolute;
    top: 0;
    left: 0;
    pointer-events: none;
}
.link, .link path {
    fill: none;
    stroke: rgba(255, 255, 255, 0.3);
    marker-end: url(#dart);
}
.cut, .cut path {
    marker-end: none;
}
.lit {
    stroke: rgba(255, 255, 255, 0.6);
}
.hot {
    stroke: #f0f0f0;
}
.dash {
    fill: none;
    stroke: #fff;
    stroke-width: 1px;
    stroke-dasharray: 3 2;
}

/* node places on the board */
.n-price-ba { left: 316px; top: 320px; width: 77px; }
.n-base { left: 177px; top: 395px; width: 98px; }
.n-logic { left: 402px; top: 414px; width: 217px; height: 115px; }
.n-formula3 { left: 639px; top: 158px; width: 130px; height: 98px; }
.n-update { left: 542px; top: 269px; }
.n-formula1 { left: 718px; top: 401px; width: 130px; height: 88px; }
.n-opsh { left: 964px; top: 223px; }
.n-opl { left: 911px; top: 384px; }
.n-entry { left: 1233px; top: 131px; width: 77px; }
.n-entry1 { left: 1259px; top: 486px; width: 82px; }
.n-zpsh { left: 1189px; top: 209px; }
.n-zpl { left: 1194px; top: 391px; }
.n-formula4 { left: 1365px; top: 185px; width: 130px; height: 59px; }
.n-formula8 { left: 1358px; top: 428px; width: 130px; height: 59px; }
.n-option { left: 99px; top: 573px; }
.n-stream { left: 456px; top: 718px; width: 117px; }
.n-link { left: 201px; top: 771px; width: 138px; height: 40px; white-space: nowrap; }
.n-optbase { left: 669px; top: 671px; width: 94px; }
.n-profit { left: 874px; top: 663px; width: 158px; }
.n-series { left: 592px; top: 788px; width: 107px; }
.n-strike { left: 818px; top: 794px; width: 115px; }
.n-const { left: 1028px; top: 818px; }
.n-group { left: 1356px; top: 839px; width: 260px; height: 60px; }
.n-main { left: 1242px; top: 711px; }
.n-delta { left: 1243px; top: 825px; }

/* right side */
.side {
    display: flex;
    flex-direction: column;
    gap: 4px;
    padding-top: 1px;
    min-height: 0;
}
.side h2 {
    height: 19px;
    display: flex;
    align-items: center;
    gap: 7px;
    padding: 0 6px 0 4px;
    color: #e0e0e0;
    background: linear-gradient(#757575, #4c4c4c);
}
.side h2 i {
    flex: 1;
    height: 5px;
    background: conic-gradient(#8c8c8c 25%, transparent 0 50%, #8c8c8c 0 75%, transparent 0) 0 0 / 4px 4px;
    opacity: 0.6;
}
.side h2 svg {
    margin-left: 2px;
    color: #000;
}
.side h2 .faint {
    color: #777;
}
.palette {
    height: 390px;
    display: flex;
    flex-direction: column;
    background: #393939;
}
.search {
    display: flex;
    height: 21px;
    border-bottom: 1px solid #000;
}
.search button {
    width: 19px;
    display: grid;
    place-items: center;
    color: #fff;
    background: #5e5e5e;
}
.search .dim {
    color: #888;
    background: #4c4c4c;
}
.search input {
    flex: 1;
    min-width: 0;
    background: #444;
    border: 1px solid #000;
}
.search button:last-child {
    margin-left: 1px;
}
.palette-body {
    flex: 1;
    min-height: 0;
    display: flex;
}
.palette-body ul {
    flex: 1;
    overflow: hidden;
}
.palette-body li {
    height: 25px;
    line-height: 25px;
    padding-left: 45px;
}
.palette-body li:first-child {
    margin-top: -6px;
}
.palette-body li.hover {
    background: #333;
}
.palette-body .scroll {
    margin: 1px 1px 2px;
    background: #343434;
}
.palette-body .thumb {
    height: 72px;
    margin-top: 111px;
}
.props {
    flex: 1;
    display: flex;
    flex-direction: column;
}
.props-body {
    flex: 1;
    margin-top: 1px;
    background: #4a4a4a;
    border-bottom: 1px solid #888;
}
.props-tabs {
    display: flex;
    gap: 1px;
    height: 19px;
    margin-top: 1px;
    background: #303030;
}
.props-tabs button {
    padding: 0 6px 3px 4px;
    color: #a0a0a0;
    background: #505050;
    border-top: 1px solid #777;
    border-right: 1px solid #666;
}
.props-tabs .active {
    color: #fff;
    background: #747474;
    text-decoration: underline;
    text-underline-offset: 2px;
}

/* log */
.log {
    height: 154px;
    padding-top: 4px;
    display: flex;
    flex-direction: column;
    font-size: 12px;
}
.log::after {
    content: "";
    flex: 1;
    margin-top: 2px;
    background: #393939;
}
.log table {
    width: 100%;
    border-collapse: collapse;
    table-layout: fixed;
}
.log th {
    height: 22px;
    padding: 0 5px 0 6px;
    text-align: left;
    font-weight: normal;
    background: linear-gradient(#757575, #4c4c4c);
    border-right: 1px solid #000;
}
.log th:last-child {
    border-right: none;
}
.c-icon { width: 35px; }
.c-time { width: 100px; }
.c-number { width: 55px; }
.message-head {
    display: flex;
    align-items: center;
}
.message-head span {
    flex: 1;
}
.message-head label {
    display: flex;
    align-items: center;
    gap: 4px;
    margin-left: 18px;
}
.message-head input {
    appearance: none;
    width: 11px;
    height: 11px;
    background: #3a3a3a;
    border: 1px solid #777;
}
.message-head input:checked::after {
    content: "";
    display: block;
    width: 3px;
    height: 6px;
    margin: 0 0 0 3px;
    border: solid #fff;
    border-width: 0 1px 1px 0;
    transform: rotate(40deg);
}

/* status bar */
.status {
    height: 23px;
    display: flex;
    align-items: center;
    padding-left: 7px;
    background: linear-gradient(#6c6c6c, #515151);
    border-top: 1px solid #858585;
    border-bottom: 1px solid #333;
    font-size: 12px;
}
.provider {
    display: flex;
    align-items: center;
    width: 67px;
    justify-content: space-between;
    padding-right: 4px;
    font-size: 11px;
}
.provider input {
    appearance: none;
    width: 23px;
    height: 14px;
    border-radius: 7px;
    border: 1px solid #777;
    background: radial-gradient(circle at 15px 6px, #2fe31a 5px, #2b2b2b 6px);
}
.clock {
    width: 68px;
    height: 18px;
    padding-left: 3px;
    background: #3a3a3a;
    border: 1px solid #888;
    border-top-color: #222;
    border-left-color: #222;
}
.grip {
    width: 10px;
    height: 20px;
    margin: 0 3px 0 6px;
    background: repeating-linear-gradient(90deg, #858585 0 1px, transparent 1px 3px);
}
.sheet {
    height: 21px;
    width: 56px;
    display: flex;
    align-items: center;
    gap: 4px;
    padding-left: 4px;
    color: #fff;
    background: #4a4a4a;
    border: 1px solid #000;
    border-top: none;
    border-radius: 0 0 7px 7px;
    font-size: 11px;
}
.add-sheet {
    width: 22px;
    height: 21px;
    display: grid;
    place-items: center;
    border-right: 1px solid #777;
}
.counter {
    width: 64px;
    height: 22px;
    margin: 0 16px 0 auto;
    display: flex;
    align-items: flex-start;
    background: #3a3a3a;
    border: 1px solid #000;
    border-width: 0 1px;
}
.counter svg {
    margin: 6px 8px 0;
}
.counter input {
    width: 33px;
    height: 17px;
    padding-right: 2px;
    text-align: right;
    background: #000;
}

/* windows taskbar */
.taskbar {
    height: 30px;
    display: flex;
    background: #000;
    font-size: 12px;
}
.system, .apps, .tray {
    display: flex;
    align-items: center;
}
.system button, .apps button, .tray span {
    height: 30px;
    display: grid;
    place-items: center;
}
.system button {
    width: 36px;
}
.apps button {
    width: 37px;
    border-bottom: 2px solid transparent;
    padding-top: 2px;
}
.apps {
    margin-left: 1px;
}
.apps .open-app {
    background: linear-gradient(#76b9ed, #76b9ed) 50% 28px / 28px 2px no-repeat border-box;
}
.apps .current {
    background: #333;
    border-bottom-color: #76b9ed;
}
.tray {
    margin: 0 4px 0 auto;
    padding-right: 22px;
    border-right: 1px solid #666;
    color: #fff;
}
.tray span {
    width: 24px;
}
.lang {
    width: 36px;
}
.tray time {
    margin-left: 22px;
}
```
